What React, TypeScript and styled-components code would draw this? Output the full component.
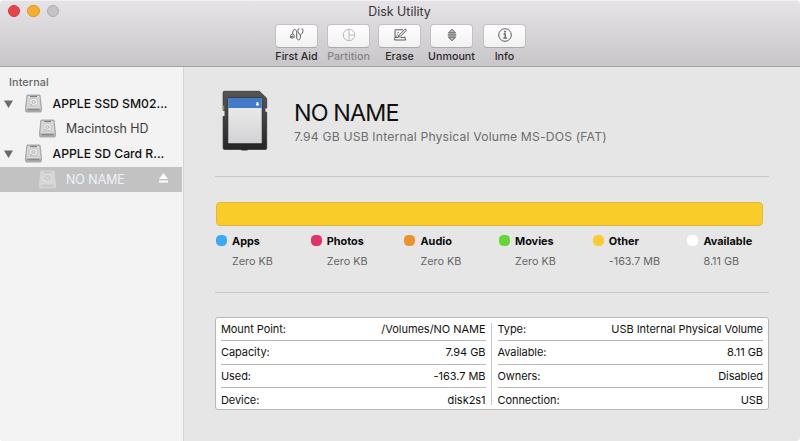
import React from "react";
import styled, { createGlobalStyle } from "styled-components";

const Global = createGlobalStyle`
  * { box-sizing: border-box; }
  body { margin: 0; background: #fff; font-family: Inter, "Liberation Sans", sans-serif; color: #111; }
`;

const Window = styled.div`
  width: 800px; height: 441px; display: flex; flex-direction: column;
  border-radius: 5px 5px 4px 4px; overflow: hidden; background: #e6e6e6;
`;
const Header = styled.header`
  height: 67px; flex: none; border-bottom: 1px solid #a5a2a5;
  background: linear-gradient(#e6e4e6, #c8c6c8); box-shadow: inset 0 1px #f3f2f3;
`;
const TitleBar = styled.div`
  height: 24px; display: grid; grid-template-columns: 200px 1fr 200px; align-items: center;
`;
const Lights = styled.div`display: flex; gap: 7px; padding: 0 0 2px 8px;`;
const Light = styled.span<{ $fill: string; $edge: string }>`
  width: 12.4px; height: 12.4px; border-radius: 50%;
  background: ${p => p.$fill}; border: 1px solid ${p => p.$edge};
`;
const Text = styled.span<{ $track?: number }>`
  white-space: pre; letter-spacing: ${p => p.$track ?? 0}px;
`;
const WindowTitle = styled(Text)`
  text-align: center; font-size: 12.4px; line-height: 22px; color: #353436; padding-right: 1px;
`;
const Toolbar = styled.nav`
  display: grid; grid-template-columns: 52px 52px 50px 54px 52px; margin-left: 270.5px; width: 260px;
`;
const Tool = styled.div<{ $off?: boolean }>`
  display: flex; flex-direction: column; align-items: center;
  color: ${p => (p.$off ? "#858386" : "#2a292b")};
  svg { color: ${p => (p.$off ? "#bbb" : "#5c5c5c")}; }
`;
const ToolButton = styled.button`
  width: 43px; height: 24px; padding: 0 0 2px; display: flex; align-items: center; justify-content: center;
  border: 1px solid #c2c0c2; border-bottom-color: #aaa8aa; border-radius: 4px;
  background: linear-gradient(#fff, #f2f1f2);
`;
const ToolLabel = styled(Text)`font-size: 10.7px; line-height: 17px; font-weight: 500;`;

const Body = styled.div`display: flex; flex: 1; min-height: 0;`;
const Sidebar = styled.aside`
  width: 184px; flex: none; background: #f3f3f3; border-right: 1px solid #d5d5d5; padding-top: 7px;
`;
const SectionName = styled(Text)`
  display: block; padding-left: 9px; height: 17px; line-height: 17px; font-size: 10.8px; font-weight: 500; color: #666;
`;
const Row = styled.div<{ $child?: boolean; $selected?: boolean }>`
  height: 25.2px; display: flex; align-items: center; margin-right: 1px;
  padding-left: ${p => (p.$child ? 39 : 4)}px; font-size: ${p => (p.$child ? 12.4 : 12.2)}px;
  font-weight: ${p => (p.$child ? 400 : 500)};
  color: ${p => (p.$selected ? "#eef3fb" : p.$child ? "#3b3b3b" : "#111")};
  background: ${p => (p.$selected ? "#c2c2c2" : "transparent")};
`;
const Disclosure = styled.svg`width: 9px; height: 8px; margin-right: 12px;`;
const RowName = styled(Text)<{ $gap: number }>`margin-left: ${p => p.$gap}px; flex: 1;`;
const EjectIcon = styled.svg`width: 9px; height: 10px; margin: 0 14px 2px 0;`;
const DriveSvg = styled.svg<{ $faded?: boolean }>`
  width: 17px; height: 19px; flex: none; opacity: ${p => (p.$faded ? 0.6 : 1)};
`;

const Content = styled.main`flex: 1; padding: 22px 31px 0 31px;`;
const Volume = styled.section`height: 87px; display: flex; padding-left: 7px;`;
const Names = styled.div`display: flex; flex-direction: column; padding: 8px 0 0 25px;`;
const VolumeName = styled(Text)`font-size: 23.3px; line-height: 32px;`;
const VolumeKind = styled(Text)`font-size: 12.2px; line-height: 16px; color: #6d6d6d;`;
const Rule = styled.hr`margin: 0; border: 0; height: 1px; background: #c7c7c7; width: 554px;`;
const UsageBar = styled.div`
  margin: 25px 0 0 1px; width: 547px; height: 24px; border-radius: 4px;
  background: #f9cc29; border: 1px solid #e2b83a;
`;
const Legend = styled.div`
  margin: 9px 0 0 1px; height: 57px; display: grid; grid-template-columns: 94.7px 93.8px 94.5px 93.8px 94.7px 80px;
`;
const LegendItem = styled.div`display: grid; grid-template-columns: 16px 1fr; grid-template-rows: 15px 23px;`;
const Dot = styled.i<{ $fill: string }>`
  width: 11px; height: 11px; border-radius: 4.5px; background: ${p => p.$fill};
`;
const Category = styled(Text)`font-size: 10.9px; font-weight: 700; line-height: 12px; color: #0b0b0b;`;
const Amount = styled(Text)`grid-column: 2; font-size: 10.8px; line-height: 23px; color: #666;`;
const Details = styled.section`
  margin-top: 24px; width: 554px; height: 93px; padding: 0 5px; display: grid;
  grid-template-columns: 264.5px 1px 1fr; column-gap: 5.5px;
  background: #fff; border: 1px solid #b8b8b8; border-radius: 3px;
`;
const Divider = styled.div`margin: 5px 0 6px; background: #c8c8c8;`;
const Facts = styled.div`display: flex; flex-direction: column;`;
const Fact = styled.div`
  height: 23.3px; display: flex; justify-content: space-between; align-items: center;
  font-size: 11px; color: #111;
  &:not(:last-child) { border-bottom: 1px solid #bcbcbc; }
`;

function Drive({ faded }: { faded?: boolean }) {
  return (
    <DriveSvg viewBox="0 0 17 19" $faded={faded}>
      <path d="M2 1h13l1.4 12v4q0 1-1 1H1.6q-1 0-1-1v-4z" fill={faded ? "#ddd" : "#b6b6b6"} stroke={faded ? "#eee" : "#999"} strokeWidth=".8" />
      <path d="M2.7 2h11.6l1.1 10.6H1.6z" fill={faded ? "#e6e6e6" : "#dadada"} />
      <ellipse cx="8.5" cy="8" rx="4.4" ry="3.7" fill={faded ? "#ddd" : "#e9e9e9"} stroke={faded ? "#fff" : "#b4b4b4"} strokeWidth=".7" />
      <ellipse cx="8.5" cy="8" rx="1.7" ry="1.3" fill="#f6f6f6" stroke={faded ? "#bbb" : "#919191"} strokeWidth=".7" />
      <path d="M5 11.6l2.2-1.6" stroke={faded ? "#fff" : "#aaa"} strokeWidth=".8" />
      <path d="M5 2.6h7" stroke={faded ? "#bbb" : "#777"} />
      <path d="M1.2 13.3h14.6" stroke="#f0f0f0" strokeWidth=".8" />
      <path d="M2.5 15.8h12" stroke={faded ? "#ccc" : "#8c8c8c"} strokeWidth="1.6" />
    </DriveSvg>
  );
}

const SdCard = () => (
  <svg width="47" height="62" viewBox="0 0 47 62">
    <defs>
      <linearGradient id="shell" x2="0" y2="1"><stop stopColor="#555" /><stop offset=".5" stopColor="#3e3e3e" /><stop offset="1" stopColor="#252525" /></linearGradient>
      <linearGradient id="label" x2="0" y2="1"><stop stopColor="#f0f0f1" /><stop offset="1" stopColor="#d2d2d4" /></linearGradient>
    </defs>
    <path d="M2.5 2.3h35l7.2 7v10h-1.2v4h1.2v36q0 1.2-1.2 1.2H25.5v.6h-6v-.6H2.5q-1.4 0-1.4-1.4V27.5h1.3v-6H1.1V3.7q0-1.4 1.4-1.4z" fill="url(#shell)" stroke="#2b2b2b" strokeWidth=".7" />
    <path d="M1 16.5v5h1.3v-5z" fill="#9c8f35" />
    <path d="M1 22v5h1.5v-5z" fill="#ededed" />
    <path d="M43.3 19.5h1.7v3h-1.7z" fill="#ddd" />
    <rect x="5.8" y="8.7" width="34.4" height="46" rx="1" fill="url(#label)" stroke="#202020" strokeWidth=".8" />
    <path d="M6.2 9.1h33.6V19H6.2z" fill="#447bc9" />
    <path d="M34 16.5v-1.4l.7-.8v-1.4h1.5v1.4l.7.8v1.4z" fill="#fff" />
  </svg>
);

const toolIcons: Record<string, React.ReactNode> = {
  "First Aid": (
    <>
      <path d="M8.8 2.6H7.9q-.8 0-.8 1.3c0 2 .7 3.8 2.6 4.2 1.9-.4 2.6-2.2 2.6-4.2q0-1.3-.8-1.3h-.9" transform="translate(1.7 -.6)" />
      <path d="M11.4 7.8v2.3c0 3.8-3.7 3.8-3.7 0V5.6c0-4-3.7-3.9-3.9-.4L3.6 7.1" />
      <path d="M3.5 7C1.3 7.4 1 9.8 2 11.1M3.7 7c2 .4 1.9 2.8.8 4.1" />
      <circle cx="3.2" cy="10.2" r="1" />
    </>
  ),
  Partition: <><circle cx="8" cy="8" r="5.7" /><path d="M8 2.3v11.4M8 8h5.7" /></>,
  Erase: (
    <>
      <path d="M11 2.8H3l.1 7.5L2.5 13h11.2l-1.1-3.3" />
      <path d="M3.2 10.4h3.2M8.5 10.4h4.2M5 8.4l-1.8 2M14.2 3.4l-5.8 6-2 .7.7-2 5.9-5.9q1-.5 1.2 1.2z" />
      <path d="M5 6l2-.7M5 8l1.3-.7" strokeWidth=".6" />
    </>
  ),
  Unmount: (
    <>
      <path d="M4.6 5.8L8 2.2l3.4 3.6zM4.6 10.2L8 13.8l3.4-3.6z" fill="currentColor" fillOpacity=".35" />
      <path d="M3.8 7.2h8.4M3.8 8.9h8.4" />
    </>
  ),
  Info: <><circle cx="8" cy="8" r="6.3" /><path d="M6.6 7h1.6v4M6.3 11.2h3.8" strokeWidth="1.3" /><circle cx="8" cy="4.7" r=".6" fill="currentColor" /></>,
};

const tools = [
  { name: "First Aid" }, { name: "Partition", off: true },
  { name: "Erase" }, { name: "Unmount" }, { name: "Info" },
];
const usage = [
  ["Apps", "Zero KB", "#3da9f5"], ["Photos", "Zero KB", "#e13468"], ["Audio", "Zero KB", "#ee922b"],
  ["Movies", "Zero KB", "#62d736"], ["Other", "-163.7 MB", "#f9cc32"], ["Available", "8.11 GB", "#fff"],
];
const left = [["Mount Point:", "/Volumes/NO NAME"], ["Capacity:", "7.94 GB"], ["Used:", "-163.7 MB"], ["Device:", "disk2s1"]];
const right = [["Type:", "USB Internal Physical Volume"], ["Available:", "8.11 GB"], ["Owners:", "Disabled"], ["Connection:", "USB"]];

const Triangle = () => <Disclosure viewBox="0 0 9 8"><path d="M0 .5h9L4.5 8z" fill="#6b6b6b" /></Disclosure>;
const FactList = ({ items }: { items: string[][] }) => (
  <Facts>{items.map(([k, v]) => <Fact key={k}><Text $track={-0.08}>{k}</Text><Text $track={-0.04}>{v}</Text></Fact>)}</Facts>
);

export default function App() {
  return (
    <>
      <Global />
      <Window>
        <Header>
          <TitleBar>
            <Lights>
              <Light $fill="#e94448" $edge="#ce3c40" />
              <Light $fill="#f6ae2c" $edge="#d99a30" />
              <Light $fill="#c5c4c5" $edge="#adacad" />
            </Lights>
            <WindowTitle>Disk Utility</WindowTitle>
          </TitleBar>
          <Toolbar>
            {tools.map(t => (
              <Tool key={t.name} $off={t.off}>
                <ToolButton aria-label={t.name}>
                  <svg width="16" height="16" viewBox="0 0 16 16" fill="none" stroke="currentColor" strokeWidth="1">{toolIcons[t.name]}</svg>
                </ToolButton>
                <ToolLabel>{t.name}</ToolLabel>
              </Tool>
            ))}
          </Toolbar>
        </Header>
        <Body>
          <Sidebar>
            <SectionName $track={0.1}>Internal</SectionName>
            <Row><Triangle /><Drive /><RowName $gap={10.5}>APPLE SSD SM02...</RowName></Row>
            <Row $child><Drive /><RowName $gap={10}>Macintosh HD</RowName></Row>
            <Row><Triangle /><Drive /><RowName $gap={10.5}>APPLE SD Card R...</RowName></Row>
            <Row $child $selected>
              <Drive faded /><RowName $gap={10}>NO NAME</RowName>
              <EjectIcon viewBox="0 0 9 10"><path d="M4.5 0L9 6H0zM0 7.5h9v2H0z" fill="#fff" /></EjectIcon>
            </Row>
          </Sidebar>
          <Content>
            <Volume>
              <SdCard />
              <Names>
                <VolumeName $track={-0.85}>NO NAME</VolumeName>
                <VolumeKind $track={0.16}>7.94 GB USB Internal Physical Volume MS-DOS (FAT)</VolumeKind>
              </Names>
            </Volume>
            <Rule />
            <UsageBar />
            <Legend>
              {usage.map(([name, size, color]) => (
                <LegendItem key={name}><Dot $fill={color} /><Category>{name}</Category><Amount>{size}</Amount></LegendItem>
              ))}
            </Legend>
            <Rule />
            <Details>
              <FactList items={left} /><Divider /><FactList items={right} />
            </Details>
          </Content>
        </Body>
      </Window>
    </>
  );
}
